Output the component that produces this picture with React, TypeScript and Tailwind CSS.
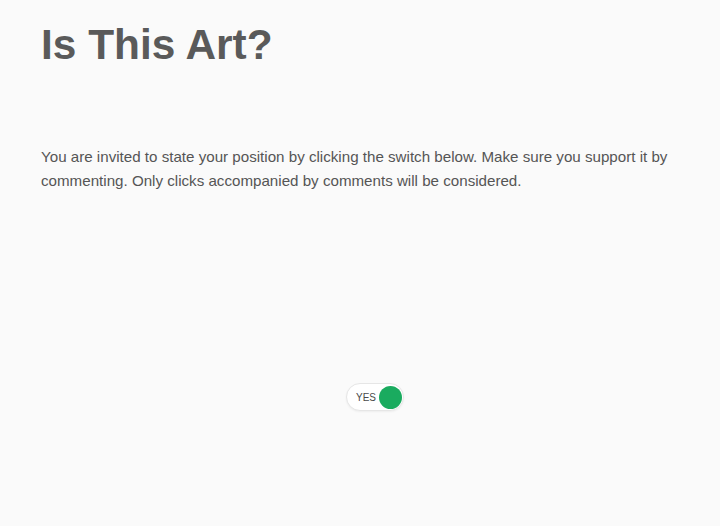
import React from "react";

export default function App() {
  return (
    <div
      className="min-h-[526px] w-full bg-[#fafafa] text-[#555555]"
      style={{ fontFamily: '"Liberation Sans", Arial, sans-serif' }}
    >
      <div className="ml-[41px] w-[668px] pt-[19px]">
        <h1 className="text-[42.4px] font-bold leading-[52px] text-[#5a5a5a]">Is This Art?</h1>
        <p className="mt-[74px] text-[15.15px] leading-[24px] text-[#555555]">
          You are invited to state your position by clicking the switch below. Make sure you support it by
          commenting. Only clicks accompanied by comments will be considered.
        </p>
        <div className="mt-[190px] flex justify-center">
          <div className="flex h-[28px] w-[58px] items-center justify-between rounded-full border border-[#e6e6e6] bg-white pl-[9px] pr-[1px] shadow-[0_1px_2px_rgba(0,0,0,0.05)]">
            <span className="text-[10px] font-medium text-[#4a4a4a]">YES</span>
            <span className="h-[23px] w-[23px] rounded-full bg-[#1aab5f]" />
          </div>
        </div>
      </div>
    </div>
  );
}
